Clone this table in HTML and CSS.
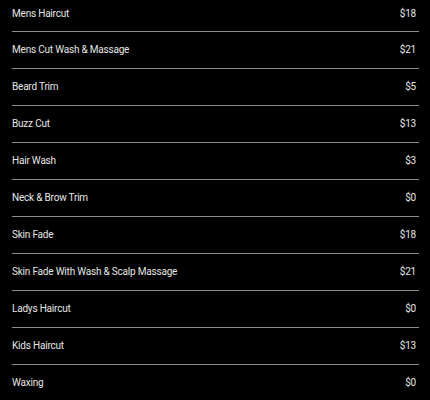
FILE: index.html
```html
<!DOCTYPE html>
<html>
<head>
<meta charset="utf-8">
<link rel="stylesheet" href="styles.css">
</head>
<body>
<ul class="menu">
  <li class="item"><span class="name">Mens Haircut</span><span class="price">$18</span></li>
  <li class="item"><span class="name">Mens Cut Wash &amp; Massage</span><span class="price">$21</span></li>
  <li class="item"><span class="name">Beard Trim</span><span class="price">$5</span></li>
  <li class="item"><span class="name">Buzz Cut</span><span class="price">$13</span></li>
  <li class="item"><span class="name">Hair Wash</span><span class="price">$3</span></li>
  <li class="item"><span class="name">Neck &amp; Brow Trim</span><span class="price">$0</span></li>
  <li class="item"><span class="name">Skin Fade</span><span class="price">$18</span></li>
  <li class="item"><span class="name">Skin Fade With Wash &amp; Scalp Massage</span><span class="price">$21</span></li>
  <li class="item"><span class="name">Ladys Haircut</span><span class="price">$0</span></li>
  <li class="item"><span class="name">Kids Haircut</span><span class="price">$13</span></li>
  <li class="item"><span class="name">Waxing</span><span class="price">$0</span></li>
</ul>
</body>
</html>
```
FILE: styles.css
```css
html, body {
  margin: 0;
  padding: 0;
  background: #000;
}
body {
  padding: 0 11px 0 12px;
  font-family: Roboto, "Liberation Sans", sans-serif;
  font-size: 10px;
  letter-spacing: -0.2px;
  color: #e6e6e6;
}
.menu {
  list-style: none;
  margin: 0;
  padding: 0;
}
.item {
  display: flex;
  justify-content: space-between;
  align-items: center;
  padding: 10px 3px 10px 0;
  line-height: 16px;
  border-bottom: 1px solid #8a8a8a;
}
.item:first-child {
  padding-top: 6px;
  padding-bottom: 9px;
}
.item:last-child {
  border-bottom: none;
}
```
